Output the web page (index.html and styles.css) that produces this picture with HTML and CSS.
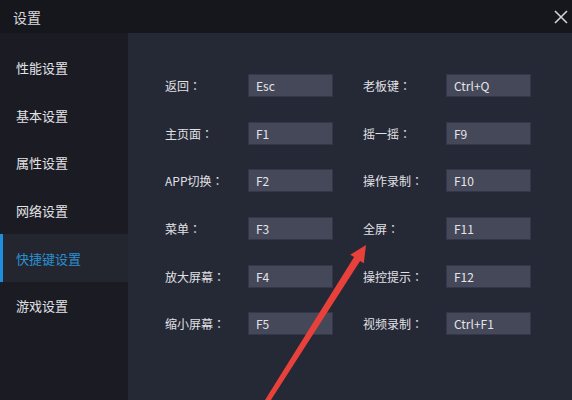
FILE: index.html
```html
<!DOCTYPE HTML><html>
<head>
  <title>设置</title>
  <meta name="viewport" content="width=device-width, initial-scale=1">
  <link rel="stylesheet" href="styles.css">
</head>
<body>
  <div class="window">
    <div class="titlebar">
      <span class="title">设置</span>
      <svg class="close" width="14" height="14" viewBox="0 0 14 14">
        <path d="M1 1 L13 13 M13 1 L1 13" stroke="#d0d2d8" stroke-width="1.6" fill="none"/>
      </svg>
    </div>
    <div class="main">
      <div class="sidebar">
        <div class="nav-item">性能设置</div>
        <div class="nav-item">基本设置</div>
        <div class="nav-item">属性设置</div>
        <div class="nav-item">网络设置</div>
        <div class="nav-item active">快捷键设置</div>
        <div class="nav-item">游戏设置</div>
      </div>
      <div class="content">
        <div class="pair"><span class="label">返回<span class="colon">：</span></span><span class="key">Esc</span></div>
        <div class="pair"><span class="label">老板键<span class="colon">：</span></span><span class="key">Ctrl+Q</span></div>
        <div class="pair"><span class="label">主页面<span class="colon">：</span></span><span class="key">F1</span></div>
        <div class="pair"><span class="label">摇一摇<span class="colon">：</span></span><span class="key">F9</span></div>
        <div class="pair"><span class="label">APP切换<span class="colon">：</span></span><span class="key">F2</span></div>
        <div class="pair"><span class="label">操作录制<span class="colon">：</span></span><span class="key">F10</span></div>
        <div class="pair"><span class="label">菜单<span class="colon">：</span></span><span class="key">F3</span></div>
        <div class="pair"><span class="label">全屏<span class="colon">：</span></span><span class="key">F11</span></div>
        <div class="pair"><span class="label">放大屏幕<span class="colon">：</span></span><span class="key">F4</span></div>
        <div class="pair"><span class="label">操控提示<span class="colon">：</span></span><span class="key">F12</span></div>
        <div class="pair"><span class="label">缩小屏幕<span class="colon">：</span></span><span class="key">F5</span></div>
        <div class="pair"><span class="label">视频录制<span class="colon">：</span></span><span class="key">Ctrl+F1</span></div>
      </div>
    </div>
    <!-- red annotation arrow drawn over the screenshot -->
    <svg class="arrow" width="572" height="400" viewBox="0 0 572 400">
      <polygon points="262.7,403.7 354.1,257.1 350.2,254.7 366,245 363.8,263.3 360.1,260.9 266.9,406.3" fill="#e8403b"/>
    </svg>
  </div>
</body>
</html>
```

FILE: styles.css
```css
body {
    margin: 0;
    padding: 0;
    background-color: #252835;
    font-family: "Noto Sans CJK SC", "Noto Sans", sans-serif;
  }
.window {
    position: relative;
    width: 572px;
    height: 400px;
    display: flex;
    flex-direction: column;
    overflow: hidden;
  }
.titlebar {
    height: 33px;
    flex-shrink: 0;
    background-color: #16171d;
    display: flex;
    align-items: center;
    justify-content: space-between;
    padding: 0 4px 0 13px;
    color: #d8d9de;
    font-size: 14px;
  }
.main {
    flex: 1;
    display: flex;
  }
.sidebar {
    width: 128px;
    flex-shrink: 0;
    background-color: #1b1c23;
    padding-top: 11px;
  }
.nav-item {
    height: 47.6px;
    display: flex;
    align-items: center;
    padding-left: 16px;
    font-size: 13px;
    color: #e2e3e7;
    box-sizing: border-box;
  }
.nav-item.active {
    background-color: #23262f;
    color: #2b8fd2;
    border-left: 3px solid #1e8fdc;
    padding-left: 13px;
  }
.content {
    flex: 1;
    display: grid;
    grid-template-columns: 168px 168px;
    grid-auto-rows: 47.6px;
    column-gap: 30px;
    align-content: start;
    padding: 29px 0 0 37px;
  }
.pair {
    display: flex;
    align-items: center;
  }
.label {
    width: 83px;
    flex-shrink: 0;
    font-size: 12px;
    color: #e0e1e5;
  }
/* centered full-width colon, like the Windows UI font */
.colon {
    font-family: "Noto Sans CJK TC", sans-serif;
  }
.key {
    width: 85px;
    height: 23px;
    box-sizing: border-box;
    display: flex;
    align-items: center;
    padding-left: 7px;
    background-color: #454859;
    border: 1px solid #34374a;
    font-size: 12px;
    color: #e4e5ea;
  }
.arrow {
    position: absolute;
    left: 0;
    top: 0;
    pointer-events: none;
  }
```
